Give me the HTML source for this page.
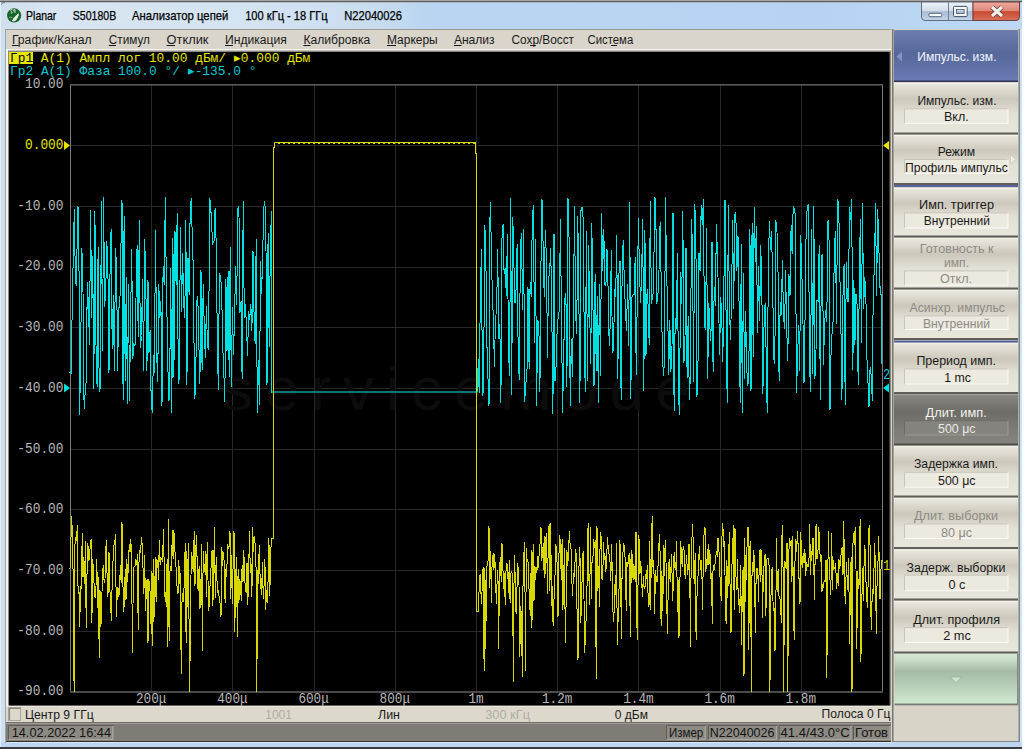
<!DOCTYPE html>
<html><head><meta charset="utf-8"><style>
html,body{margin:0;padding:0}
body{width:1024px;height:749px;overflow:hidden;background:#fff}
svg{display:block}
</style></head><body>
<svg width="1024" height="749" viewBox="0 0 1024 749">
<defs>
<linearGradient id="gglass" x1="0" y1="0" x2="1" y2="0">
 <stop offset="0" stop-color="#d0dfee"/><stop offset="0.05" stop-color="#d8e5f2"/><stop offset="0.25" stop-color="#d4e3f2"/><stop offset="0.37" stop-color="#c8dcf0"/><stop offset="0.42" stop-color="#b9d5f1"/><stop offset="0.8" stop-color="#b6d4f2"/><stop offset="1" stop-color="#bcd8f4"/></linearGradient>
<linearGradient id="gblue" x1="0" y1="0" x2="0" y2="1">
 <stop offset="0" stop-color="#6c7db0"/><stop offset="0.45" stop-color="#56679a"/><stop offset="1" stop-color="#6a7cb4"/></linearGradient>
<linearGradient id="gbtn" x1="0" y1="0" x2="0" y2="1">
 <stop offset="0" stop-color="#ebe8de"/><stop offset="0.32" stop-color="#ccc8bb"/><stop offset="0.6" stop-color="#e2dfd4"/><stop offset="1" stop-color="#e9e6dc"/></linearGradient>
<linearGradient id="gpress" x1="0" y1="0" x2="0" y2="1">
 <stop offset="0" stop-color="#8a8882"/><stop offset="0.35" stop-color="#6e6c66"/><stop offset="0.7" stop-color="#7e7c76"/><stop offset="1" stop-color="#86847e"/></linearGradient>
<linearGradient id="ggreen" x1="0" y1="0" x2="0" y2="1">
 <stop offset="0" stop-color="#d4e8d4"/><stop offset="0.12" stop-color="#c8dcc8"/><stop offset="0.34" stop-color="#a6baa6"/><stop offset="0.62" stop-color="#b8ceb8"/><stop offset="1" stop-color="#d2ead2"/></linearGradient>
<linearGradient id="gcap" x1="0" y1="0" x2="0" y2="1">
 <stop offset="0" stop-color="#eef3f9"/><stop offset="0.48" stop-color="#d2dde9"/><stop offset="0.52" stop-color="#aabcd2"/><stop offset="1" stop-color="#c4d4e6"/></linearGradient>
<linearGradient id="gclose" x1="0" y1="0" x2="0" y2="1">
 <stop offset="0" stop-color="#f2aaa0"/><stop offset="0.48" stop-color="#dc8878"/><stop offset="0.52" stop-color="#cc4a30"/><stop offset="1" stop-color="#d8705a"/></linearGradient>
</defs>
<rect x="0" y="0" width="1024" height="749" fill="#ffffff"/><rect x="0" y="0" width="1022" height="1" fill="#a4a4a4"/><rect x="0" y="1" width="1022" height="1.6" fill="#5e5e5e"/><path d="M0,7Q0,2.5 5,2.5H1022V749H0Z" fill="url(#gglass)"/><rect x="0" y="742" width="1022" height="5" fill="#bcd6f2"/><rect x="6" y="742" width="1014" height="1" fill="#d6e8f8"/><rect x="0" y="747" width="1022" height="2" fill="#3c3c3c"/><path d="M0.5,7Q0.5,2.5 5,2.5" stroke="#6d7e92" stroke-width="1" fill="none"/><rect x="0" y="2" width="1" height="745" fill="#e4eef8"/><rect x="5" y="29" width="1" height="714" fill="#98a6b4"/><rect x="1020" y="29" width="2" height="714" fill="#cfe3f7"/><circle cx="14.1" cy="15.4" r="7.1" fill="#16662a"/><path d="M18.6,13L16,15.6L13.6,18L11.8,21L14,21.4L16.2,20.2L17.8,17.6L18.8,15.2Z" fill="#e6f0e6"/><path d="M12.6,9.4Q10.6,9.2 10.8,10.8Q11.2,11.8 12.2,12.2Q12.8,13.4 10.6,13.2M15,11.2Q13.2,11.6 13.4,10.2Q13.8,9 15,9.4V13" stroke="#cfe0cf" stroke-width="0.9" fill="none"/><path d="M9,17.5Q11,16.5 12.5,18" stroke="#9cc09c" stroke-width="0.8" fill="none"/><text x="26.1" y="20.2" font-family="Liberation Sans" font-size="12.4" fill="#000" textLength="30.2" lengthAdjust="spacingAndGlyphs" stroke="#000" stroke-width="0.25">Planar</text><text x="72.8" y="20.2" font-family="Liberation Sans" font-size="12.4" fill="#000" textLength="43.4" lengthAdjust="spacingAndGlyphs" stroke="#000" stroke-width="0.25">S50180B</text><text x="132.0" y="20.2" font-family="Liberation Sans" font-size="12.4" fill="#000" textLength="96.4" lengthAdjust="spacingAndGlyphs" stroke="#000" stroke-width="0.25">Анализатор цепей</text><text x="245.2" y="20.2" font-family="Liberation Sans" font-size="12.4" fill="#000" textLength="82.5" lengthAdjust="spacingAndGlyphs" stroke="#000" stroke-width="0.25">100 кГц - 18 ГГц</text><text x="344.2" y="20.2" font-family="Liberation Sans" font-size="12.4" fill="#000" textLength="57.8" lengthAdjust="spacingAndGlyphs" stroke="#000" stroke-width="0.25">N22040026</text><path d="M921.5,2V17Q921.5,20.5 925,20.5H973V2Z" fill="url(#gcap)" stroke="#5e6e82" stroke-width="1"/>
<rect x="948" y="2.5" width="1" height="18" fill="#6e7e92"/>
<path d="M973,2V20.5H1016Q1019.5,20.5 1019.5,17V2Z" fill="url(#gclose)" stroke="#6e4040" stroke-width="1"/>
<rect x="929" y="13.3" width="12.7" height="3.4" rx="1" fill="#fff" stroke="#44546a" stroke-width="0.9"/>
<rect x="953.5" y="6.4" width="13.6" height="10.2" rx="1" fill="none" stroke="#44546a" stroke-width="1"/>
<rect x="955.2" y="8.1" width="10.2" height="6.8" fill="none" stroke="#f8f8f8" stroke-width="2"/>
<rect x="956.5" y="9.4" width="7.6" height="4.2" fill="none" stroke="#44546a" stroke-width="0.8"/>
<path d="M992,7L1002,16M1002,7L992,16" stroke="#6a3a30" stroke-width="5"/>
<path d="M992,7L1002,16M1002,7L992,16" stroke="#f0eeee" stroke-width="3.2"/>
<rect x="6" y="29" width="886" height="21" fill="#d9d5ca"/><rect x="6" y="29" width="886" height="1" fill="#9c9a92"/><text x="11.9" y="44.0" font-family="Liberation Sans" font-size="12" fill="#1a1a1a" textLength="79.7" lengthAdjust="spacingAndGlyphs" >График/Канал</text><text x="108.8" y="44.0" font-family="Liberation Sans" font-size="12" fill="#1a1a1a" textLength="41.2" lengthAdjust="spacingAndGlyphs" >Стимул</text><text x="166.6" y="44.0" font-family="Liberation Sans" font-size="12" fill="#1a1a1a" textLength="41.8" lengthAdjust="spacingAndGlyphs" >Отклик</text><text x="225.0" y="44.0" font-family="Liberation Sans" font-size="12" fill="#1a1a1a" textLength="61.9" lengthAdjust="spacingAndGlyphs" >Индикация</text><text x="303.4" y="44.0" font-family="Liberation Sans" font-size="12" fill="#1a1a1a" textLength="66.8" lengthAdjust="spacingAndGlyphs" >Калибровка</text><text x="387.0" y="44.0" font-family="Liberation Sans" font-size="12" fill="#1a1a1a" textLength="50.7" lengthAdjust="spacingAndGlyphs" >Маркеры</text><text x="453.9" y="44.0" font-family="Liberation Sans" font-size="12" fill="#1a1a1a" textLength="40.7" lengthAdjust="spacingAndGlyphs" >Анализ</text><text x="511.5" y="44.0" font-family="Liberation Sans" font-size="12" fill="#1a1a1a" textLength="62.5" lengthAdjust="spacingAndGlyphs" >Сохр/Восст</text><text x="587.5" y="44.0" font-family="Liberation Sans" font-size="12" fill="#1a1a1a" textLength="45.7" lengthAdjust="spacingAndGlyphs" >Система</text><rect x="11.9" y="45" width="6.6" height="1" fill="#1a1a1a"/><rect x="108.8" y="45" width="7.200000000000003" height="1" fill="#1a1a1a"/><rect x="166.6" y="45" width="8.400000000000006" height="1" fill="#1a1a1a"/><rect x="225" y="45" width="8" height="1" fill="#1a1a1a"/><rect x="303.4" y="45" width="7.100000000000023" height="1" fill="#1a1a1a"/><rect x="387" y="45" width="9" height="1" fill="#1a1a1a"/><rect x="453.9" y="45" width="7.600000000000023" height="1" fill="#1a1a1a"/><rect x="530" y="45" width="6" height="1" fill="#1a1a1a"/><rect x="611" y="45" width="6" height="1" fill="#1a1a1a"/>

<rect x="6" y="49" width="886" height="658" fill="#f6f4ee"/>
<rect x="8" y="50.5" width="883" height="655" fill="#8a8880"/>
<rect x="9" y="52" width="881" height="653.5" fill="#000"/>
<path d="M151.5,85V692M70,145.5H882M232.5,85V692M70,206.5H882M314.5,85V692M70,267.5H882M395.5,85V692M70,327.5H882M476.5,85V692M70,388.5H882M557.5,85V692M70,449.5H882M638.5,85V692M70,509.5H882M720.5,85V692M70,570.5H882M801.5,85V692M70,631.5H882" stroke="#282828" stroke-width="1" fill="none"/>
<path d="M70.5,85V693M882.5,85V693" stroke="#7c7c7c" stroke-width="1"/><rect x="70" y="84" width="813" height="1.6" fill="#5a5a5a"/><rect x="70" y="691" width="813" height="2" fill="#4a4a4a"/><rect x="889" y="52" width="1" height="653" fill="#383838"/>
<text x="222" y="410" font-family="Liberation Sans" font-size="62" fill="#0c0c0c" textLength="468" lengthAdjust="spacing">servicemode</text>
<text x="25.0" y="88.3" font-family="Liberation Mono" font-size="14" fill="#b8b8b8" textLength="38.5" lengthAdjust="spacingAndGlyphs" >10.00</text><text x="25.0" y="149.0" font-family="Liberation Mono" font-size="14" fill="#e6e600" textLength="38.5" lengthAdjust="spacingAndGlyphs" >0.000</text><text x="17.3" y="209.7" font-family="Liberation Mono" font-size="14" fill="#b8b8b8" textLength="46.2" lengthAdjust="spacingAndGlyphs" >-10.00</text><text x="17.3" y="270.4" font-family="Liberation Mono" font-size="14" fill="#b8b8b8" textLength="46.2" lengthAdjust="spacingAndGlyphs" >-20.00</text><text x="17.3" y="331.1" font-family="Liberation Mono" font-size="14" fill="#b8b8b8" textLength="46.2" lengthAdjust="spacingAndGlyphs" >-30.00</text><text x="17.3" y="391.8" font-family="Liberation Mono" font-size="14" fill="#b8b8b8" textLength="46.2" lengthAdjust="spacingAndGlyphs" >-40.00</text><text x="17.3" y="452.5" font-family="Liberation Mono" font-size="14" fill="#b8b8b8" textLength="46.2" lengthAdjust="spacingAndGlyphs" >-50.00</text><text x="17.3" y="513.2" font-family="Liberation Mono" font-size="14" fill="#b8b8b8" textLength="46.2" lengthAdjust="spacingAndGlyphs" >-60.00</text><text x="17.3" y="573.9" font-family="Liberation Mono" font-size="14" fill="#b8b8b8" textLength="46.2" lengthAdjust="spacingAndGlyphs" >-70.00</text><text x="17.3" y="634.6" font-family="Liberation Mono" font-size="14" fill="#b8b8b8" textLength="46.2" lengthAdjust="spacingAndGlyphs" >-80.00</text><text x="17.3" y="695.3" font-family="Liberation Mono" font-size="14" fill="#b8b8b8" textLength="46.2" lengthAdjust="spacingAndGlyphs" >-90.00</text><text x="136.0" y="702.6" font-family="Liberation Mono" font-size="14" fill="#b8b8b8" textLength="30.4" lengthAdjust="spacingAndGlyphs" >200μ</text><text x="217.2" y="702.6" font-family="Liberation Mono" font-size="14" fill="#b8b8b8" textLength="30.4" lengthAdjust="spacingAndGlyphs" >400μ</text><text x="298.4" y="702.6" font-family="Liberation Mono" font-size="14" fill="#b8b8b8" textLength="30.4" lengthAdjust="spacingAndGlyphs" >600μ</text><text x="379.6" y="702.6" font-family="Liberation Mono" font-size="14" fill="#b8b8b8" textLength="30.4" lengthAdjust="spacingAndGlyphs" >800μ</text><text x="468.4" y="702.6" font-family="Liberation Mono" font-size="14" fill="#b8b8b8" textLength="15.2" lengthAdjust="spacingAndGlyphs" >1m</text><text x="542.0" y="702.6" font-family="Liberation Mono" font-size="14" fill="#b8b8b8" textLength="30.4" lengthAdjust="spacingAndGlyphs" >1.2m</text><text x="623.2" y="702.6" font-family="Liberation Mono" font-size="14" fill="#b8b8b8" textLength="30.4" lengthAdjust="spacingAndGlyphs" >1.4m</text><text x="704.4" y="702.6" font-family="Liberation Mono" font-size="14" fill="#b8b8b8" textLength="30.4" lengthAdjust="spacingAndGlyphs" >1.6m</text><text x="785.6" y="702.6" font-family="Liberation Mono" font-size="14" fill="#b8b8b8" textLength="30.4" lengthAdjust="spacingAndGlyphs" >1.8m</text>
<rect x="9" y="52" width="24" height="12" fill="#e6e600"/><text x="10.0" y="62.0" font-family="Liberation Mono" font-size="12.8" fill="#000" textLength="23.1" lengthAdjust="spacingAndGlyphs" >Гр1</text><text x="40.8" y="62.0" font-family="Liberation Mono" font-size="12.8" fill="#e6e600" textLength="269.5" lengthAdjust="spacingAndGlyphs" >A(1) Ампл лог 10.00 дБм/ ▸0.000 дБм</text><text x="10.0" y="74.5" font-family="Liberation Mono" font-size="12.8" fill="#10c8d0" textLength="246.4" lengthAdjust="spacingAndGlyphs" >Гр2 A(1) Фаза 100.0 °/ ▸-135.0 °</text>
<path shape-rendering="crispEdges" d="M70.0,372.5 L71.1,373.1 L72.2,309.3 L73.2,259.3 L74.3,208.8 L75.4,280.6 L76.5,286.0 L77.6,206.9 L78.7,207.6 L79.7,414.8 L80.8,339.2 L81.9,248.1 L83.0,291.8 L84.1,409.4 L85.2,392.7 L86.2,381.0 L87.3,282.5 L88.4,304.5 L89.5,344.5 L90.6,210.3 L91.7,318.1 L92.7,256.2 L93.8,388.8 L94.9,211.0 L96.0,345.1 L97.1,386.7 L98.1,246.6 L99.2,392.2 L100.3,387.1 L101.4,201.0 L102.5,351.2 L103.6,197.3 L104.6,306.7 L105.7,292.2 L106.8,241.3 L107.9,267.8 L109.0,372.8 L110.1,266.0 L111.1,229.5 L112.2,349.3 L113.3,294.8 L114.4,371.2 L115.5,248.3 L116.6,266.7 L117.6,371.4 L118.7,307.5 L119.8,307.4 L120.9,248.5 L122.0,200.2 L123.1,400.4 L124.1,215.7 L125.2,381.2 L126.3,277.2 L127.4,404.3 L128.5,284.1 L129.5,401.1 L130.6,318.2 L131.7,249.3 L132.8,358.6 L133.9,344.0 L135.0,346.2 L136.0,298.1 L137.1,245.4 L138.2,336.7 L139.3,220.3 L140.4,347.9 L141.5,335.5 L142.5,279.1 L143.6,371.1 L144.7,239.3 L145.8,282.1 L146.9,370.9 L148.0,279.9 L149.0,352.5 L150.1,330.5 L151.2,402.1 L152.3,413.2 L153.4,354.8 L154.4,373.3 L155.5,230.3 L156.6,352.4 L157.7,381.8 L158.8,284.5 L159.9,317.6 L160.9,301.5 L162.0,406.0 L163.1,266.2 L164.2,284.7 L165.3,197.2 L166.4,288.6 L167.4,334.7 L168.5,400.8 L169.6,398.4 L170.7,268.4 L171.8,412.6 L172.9,237.9 L173.9,376.5 L175.0,231.3 L176.1,285.3 L177.2,213.0 L178.3,384.1 L179.3,377.7 L180.4,227.5 L181.5,311.9 L182.6,253.3 L183.7,304.2 L184.8,317.6 L185.8,220.2 L186.9,385.4 L188.0,257.8 L189.1,294.5 L190.2,209.5 L191.3,197.6 L192.3,239.5 L193.4,271.5 L194.5,399.3 L195.6,391.0 L196.7,301.7 L197.8,296.1 L198.8,342.4 L199.9,384.2 L201.0,270.5 L202.1,370.0 L203.2,284.0 L204.3,326.5 L205.3,357.8 L206.4,306.3 L207.5,347.6 L208.6,349.0 L209.7,198.2 L210.7,205.5 L211.8,229.5 L212.9,243.6 L214.0,241.3 L215.1,207.7 L216.2,244.4 L217.2,328.0 L218.3,390.2 L219.4,273.2 L220.5,276.9 L221.6,287.8 L222.7,345.3 L223.7,368.2 L224.8,402.1 L225.9,278.9 L227.0,351.1 L228.1,271.5 L229.2,376.6 L230.2,247.3 L231.3,386.9 L232.4,307.1 L233.5,355.1 L234.6,313.6 L235.6,265.9 L236.7,304.8 L237.8,208.0 L238.9,206.4 L240.0,312.5 L241.1,301.0 L242.1,378.6 L243.2,201.4 L244.3,318.4 L245.4,304.0 L246.5,327.4 L247.6,356.0 L248.6,311.4 L249.7,319.7 L250.8,304.2 L251.9,331.1 L253.0,251.1 L254.1,317.5 L255.1,343.6 L256.2,238.7 L257.3,412.9 L258.4,359.7 L259.5,405.3 L260.5,261.1 L261.6,293.7 L262.7,254.0 L263.8,207.2 L264.9,200.6 L266.0,250.8 L267.0,384.8 L268.1,232.7 L269.2,347.3 L270.3,251.4 L271.4,211.3 L272.0,392.0" fill="none" stroke="#00e0e0" stroke-width="1.0" stroke-linecap="square"/>
<path shape-rendering="crispEdges" d="M477.5,392.0 L478.2,359.0 L479.2,392.5 L480.3,299.3 L481.4,249.0 L482.5,395.6 L483.6,389.8 L484.7,224.6 L485.7,243.1 L486.8,340.9 L487.9,375.9 L489.0,406.3 L490.1,201.6 L491.2,238.2 L492.2,289.2 L493.3,317.1 L494.4,366.7 L495.5,318.4 L496.6,310.1 L497.7,249.2 L498.7,338.7 L499.8,324.0 L500.9,403.2 L502.0,238.4 L503.1,224.2 L504.1,274.1 L505.2,268.0 L506.3,295.8 L507.4,234.4 L508.5,351.1 L509.6,376.3 L510.6,198.4 L511.7,395.4 L512.8,216.7 L513.9,263.8 L515.0,303.0 L516.1,289.4 L517.1,243.9 L518.2,356.0 L519.3,379.9 L520.4,246.6 L521.5,232.9 L522.6,310.1 L523.6,229.4 L524.7,401.8 L525.8,382.6 L526.9,379.0 L528.0,286.7 L529.1,368.5 L530.1,282.4 L531.2,296.8 L532.3,220.1 L533.4,205.2 L534.5,343.1 L535.5,239.1 L536.6,405.5 L537.7,320.2 L538.8,322.7 L539.9,392.0 L541.0,261.9 L542.0,199.3 L543.1,244.9 L544.2,296.8 L545.3,230.1 L546.4,258.2 L547.5,357.8 L548.5,279.2 L549.6,271.5 L550.7,247.9 L551.8,312.9 L552.9,414.0 L554.0,233.9 L555.0,380.9 L556.1,365.9 L557.2,328.0 L558.3,315.4 L559.4,310.4 L560.4,219.4 L561.5,321.0 L562.6,412.6 L563.7,356.0 L564.8,298.7 L565.9,293.5 L566.9,386.6 L568.0,198.4 L569.1,240.6 L570.2,405.7 L571.3,339.5 L572.4,377.4 L573.4,313.4 L574.5,206.0 L575.6,313.9 L576.7,334.3 L577.8,216.3 L578.9,301.8 L579.9,402.5 L581.0,210.6 L582.1,207.1 L583.2,219.5 L584.3,345.7 L585.3,391.7 L586.4,231.1 L587.5,381.1 L588.6,245.4 L589.7,314.3 L590.8,363.5 L591.8,222.7 L592.9,301.1 L594.0,385.9 L595.1,274.4 L596.2,370.8 L597.3,296.1 L598.3,402.6 L599.4,284.3 L600.5,376.3 L601.6,213.5 L602.7,270.9 L603.8,228.8 L604.8,285.0 L605.9,285.4 L607.0,249.4 L608.1,288.4 L609.2,345.6 L610.3,322.9 L611.3,250.1 L612.4,352.1 L613.5,351.5 L614.6,289.0 L615.7,297.2 L616.7,234.8 L617.8,379.0 L618.9,274.7 L620.0,260.9 L621.1,399.5 L622.2,263.6 L623.2,240.2 L624.3,280.4 L625.4,309.4 L626.5,330.9 L627.6,283.9 L628.7,346.2 L629.7,202.0 L630.8,399.0 L631.9,297.5 L633.0,294.8 L634.1,294.4 L635.2,257.1 L636.2,374.6 L637.3,295.7 L638.4,217.8 L639.5,273.3 L640.6,302.7 L641.6,275.4 L642.7,219.3 L643.8,390.8 L644.9,229.9 L646.0,355.9 L647.1,289.5 L648.1,305.0 L649.2,344.6 L650.3,200.7 L651.4,303.7 L652.5,297.1 L653.6,290.5 L654.6,197.3 L655.7,199.5 L656.8,303.8 L657.9,296.3 L659.0,270.0 L660.1,222.4 L661.1,276.3 L662.2,343.7 L663.3,375.7 L664.4,363.6 L665.5,197.4 L666.5,270.8 L667.6,303.6 L668.7,374.5 L669.8,320.1 L670.9,371.8 L672.0,347.2 L673.0,212.8 L674.1,410.9 L675.2,318.5 L676.3,328.6 L677.4,253.5 L678.5,393.9 L679.5,414.6 L680.6,271.8 L681.7,303.6 L682.8,210.8 L683.9,363.4 L685.0,337.3 L686.0,247.9 L687.1,377.9 L688.2,316.3 L689.3,399.5 L690.4,375.8 L691.5,218.9 L692.5,248.7 L693.6,382.0 L694.7,203.9 L695.8,225.4 L696.9,397.4 L697.9,373.7 L699.0,252.6 L700.1,270.8 L701.2,205.3 L702.3,224.6 L703.4,199.4 L704.4,325.0 L705.5,330.1 L706.6,228.4 L707.7,378.7 L708.8,303.3 L709.9,327.7 L710.9,341.4 L712.0,241.8 L713.1,372.2 L714.2,286.6 L715.3,305.6 L716.4,224.5 L717.4,252.6 L718.5,296.3 L719.6,354.9 L720.7,296.8 L721.8,319.2 L722.8,362.0 L723.9,284.8 L725.0,200.5 L726.1,319.4 L727.2,402.8 L728.3,205.3 L729.3,297.9 L730.4,339.7 L731.5,303.6 L732.6,219.6 L733.7,309.0 L734.8,214.4 L735.8,212.3 L736.9,270.7 L738.0,235.7 L739.1,307.0 L740.2,402.9 L741.3,243.9 L742.3,412.5 L743.4,273.2 L744.5,379.2 L745.6,311.0 L746.7,367.2 L747.7,385.6 L748.8,380.5 L749.9,229.2 L751.0,391.3 L752.1,223.1 L753.2,357.1 L754.2,207.0 L755.3,262.4 L756.4,225.8 L757.5,332.5 L758.6,265.6 L759.7,320.5 L760.7,244.6 L761.8,284.0 L762.9,393.5 L764.0,327.2 L765.1,303.1 L766.2,355.2 L767.2,413.4 L768.3,269.8 L769.4,220.9 L770.5,249.5 L771.6,231.1 L772.7,285.4 L773.7,358.8 L774.8,364.1 L775.9,220.5 L777.0,232.3 L778.1,275.5 L779.1,381.1 L780.2,302.5 L781.3,314.5 L782.4,260.5 L783.5,316.9 L784.6,328.9 L785.6,270.3 L786.7,328.1 L787.8,361.4 L788.9,274.2 L790.0,296.4 L791.1,225.4 L792.1,253.5 L793.2,205.9 L794.3,209.3 L795.4,215.4 L796.5,392.7 L797.6,356.6 L798.6,324.6 L799.7,371.0 L800.8,235.4 L801.9,273.7 L803.0,323.9 L804.0,383.4 L805.1,314.8 L806.2,224.4 L807.3,206.7 L808.4,204.6 L809.5,361.8 L810.5,392.0 L811.6,228.7 L812.7,373.6 L813.8,206.1 L814.9,379.1 L816.0,350.1 L817.0,300.2 L818.1,301.0 L819.2,244.8 L820.3,399.9 L821.4,256.3 L822.5,254.7 L823.5,365.1 L824.6,322.8 L825.7,309.6 L826.8,321.5 L827.9,221.1 L828.9,220.8 L830.0,410.4 L831.1,350.2 L832.2,331.0 L833.3,319.2 L834.4,248.2 L835.4,231.2 L836.5,324.3 L837.6,199.2 L838.7,203.0 L839.8,271.8 L840.9,324.7 L841.9,399.7 L843.0,295.7 L844.1,263.6 L845.2,405.1 L846.3,261.8 L847.4,301.9 L848.4,301.1 L849.5,206.6 L850.6,220.1 L851.7,198.8 L852.8,370.1 L853.9,279.8 L854.9,345.4 L856.0,294.3 L857.1,305.0 L858.2,385.3 L859.3,283.0 L860.3,219.2 L861.4,342.8 L862.5,203.4 L863.6,309.4 L864.7,277.4 L865.8,290.0 L866.8,355.7 L867.9,379.9 L869.0,406.8 L870.1,367.0 L871.2,375.7 L872.3,401.2 L873.3,280.9 L874.4,271.8 L875.5,203.0 L876.6,295.9 L877.7,209.3 L878.8,243.7 L879.8,287.0 L880.9,286.7 L882.0,363.8" fill="none" stroke="#00e0e0" stroke-width="1.0" stroke-linecap="square"/>
<polyline points="272.0,392.0 477.5,392.0" fill="none" stroke="#0e9c9c" stroke-width="1.3"/>
<path shape-rendering="crispEdges" d="M70.0,568.5 L70.8,544.1 L71.6,516.5 L72.4,533.8 L73.2,578.9 L74.1,691.5 L74.9,545.7 L75.7,536.6 L76.5,540.9 L77.3,525.2 L78.1,594.2 L78.9,586.1 L79.7,626.9 L80.6,585.7 L81.4,588.8 L82.2,533.1 L83.0,577.2 L83.8,557.0 L84.6,584.1 L85.4,540.6 L86.2,627.7 L87.1,567.7 L87.9,542.9 L88.7,560.1 L89.5,558.7 L90.3,543.5 L91.1,539.2 L91.9,622.6 L92.7,559.2 L93.5,570.0 L94.4,592.6 L95.2,598.2 L96.0,586.0 L96.8,559.1 L97.6,608.1 L98.4,577.1 L99.2,657.7 L100.0,590.1 L100.9,627.3 L101.7,602.6 L102.5,574.0 L103.3,565.3 L104.1,581.6 L104.9,583.3 L105.7,550.1 L106.5,539.7 L107.4,596.9 L108.2,592.1 L109.0,552.3 L109.8,588.6 L110.6,603.2 L111.4,620.9 L112.2,581.7 L113.0,561.3 L113.8,545.6 L114.7,544.4 L115.5,533.8 L116.3,617.2 L117.1,598.1 L117.9,586.7 L118.7,596.8 L119.5,593.1 L120.3,565.1 L121.2,583.4 L122.0,521.9 L122.8,578.3 L123.6,611.5 L124.4,603.3 L125.2,569.0 L126.0,600.4 L126.8,559.0 L127.7,581.9 L128.5,559.8 L129.3,544.5 L130.1,552.4 L130.9,539.0 L131.7,572.9 L132.5,652.8 L133.3,576.2 L134.1,566.4 L135.0,566.5 L135.8,558.7 L136.6,565.4 L137.4,554.2 L138.2,630.1 L139.0,562.4 L139.8,551.1 L140.6,552.3 L141.5,537.0 L142.3,546.0 L143.1,570.9 L143.9,593.9 L144.7,554.6 L145.5,611.3 L146.3,593.1 L147.1,578.9 L148.0,642.8 L148.8,579.0 L149.6,587.8 L150.4,593.5 L151.2,633.6 L152.0,571.0 L152.8,645.5 L153.6,559.3 L154.4,617.2 L155.3,557.4 L156.1,602.4 L156.9,559.9 L157.7,560.8 L158.5,579.8 L159.3,539.8 L160.1,564.7 L160.9,558.0 L161.8,558.7 L162.6,562.1 L163.4,529.1 L164.2,564.5 L165.0,596.5 L165.8,602.0 L166.6,564.4 L167.4,646.9 L168.3,519.0 L169.1,641.3 L169.9,571.9 L170.7,565.7 L171.5,571.4 L172.3,530.4 L173.1,559.3 L173.9,530.4 L174.7,550.4 L175.6,554.7 L176.4,577.6 L177.2,588.8 L178.0,594.1 L178.8,559.8 L179.6,584.1 L180.4,573.4 L181.2,673.8 L182.1,594.7 L182.9,593.3 L183.7,602.2 L184.5,567.3 L185.3,542.9 L186.1,643.3 L186.9,551.2 L187.7,607.1 L188.6,542.9 L189.4,691.5 L190.2,652.1 L191.0,574.9 L191.8,552.2 L192.6,566.3 L193.4,572.1 L194.2,530.6 L195.0,585.5 L195.9,547.2 L196.7,535.5 L197.5,588.3 L198.3,589.5 L199.1,566.3 L199.9,609.4 L200.7,601.2 L201.5,544.0 L202.4,651.2 L203.2,551.3 L204.0,563.5 L204.8,571.8 L205.6,551.2 L206.4,597.4 L207.2,541.8 L208.0,580.3 L208.9,610.9 L209.7,586.9 L210.5,584.4 L211.3,558.9 L212.1,550.1 L212.9,605.8 L213.7,565.1 L214.5,527.5 L215.3,598.2 L216.2,556.8 L217.0,581.1 L217.8,593.0 L218.6,590.2 L219.4,600.4 L220.2,603.6 L221.0,617.3 L221.8,546.7 L222.7,565.7 L223.5,551.7 L224.3,564.6 L225.1,603.1 L225.9,568.6 L226.7,576.8 L227.5,544.4 L228.3,548.1 L229.2,546.2 L230.0,530.9 L230.8,599.0 L231.6,554.7 L232.4,603.5 L233.2,559.0 L234.0,530.8 L234.8,631.7 L235.6,579.5 L236.5,557.2 L237.3,636.7 L238.1,568.6 L238.9,603.4 L239.7,579.0 L240.5,583.4 L241.3,601.0 L242.1,565.3 L243.0,582.2 L243.8,549.7 L244.6,578.2 L245.4,586.8 L246.2,593.4 L247.0,562.7 L247.8,604.7 L248.6,572.9 L249.5,531.3 L250.3,572.9 L251.1,564.4 L251.9,596.7 L252.7,527.0 L253.5,551.9 L254.3,536.1 L255.1,543.5 L255.9,549.4 L256.8,691.5 L257.6,569.6 L258.4,583.5 L259.2,545.1 L260.0,573.6 L260.8,586.7 L261.6,595.0 L262.4,562.5 L263.3,599.2 L264.1,584.8 L264.9,558.7 L265.7,609.9 L266.5,590.2 L267.3,603.0 L268.1,579.5 L268.9,537.8 L269.8,595.6 L270.6,556.0 L271.4,538.2 L273.5,538.2 L273.5,148.0 L274.5,147.0 L274.5,142.5 L275.5,142.5 L278.5,142.5 L279.0,143.5 L280.0,142.5 L280.5,142.5 L283.5,142.5 L284.0,143.5 L285.0,142.5 L285.5,142.5 L288.5,142.5 L289.0,143.5 L290.0,142.5 L290.5,142.5 L293.5,142.5 L294.0,143.5 L295.0,142.5 L295.5,142.5 L298.5,142.5 L299.0,143.5 L300.0,142.5 L300.5,142.5 L303.5,142.5 L304.0,143.5 L305.0,142.5 L305.5,142.5 L308.5,142.5 L309.0,143.5 L310.0,142.5 L310.5,142.5 L313.5,142.5 L314.0,143.5 L315.0,142.5 L315.5,142.5 L318.5,142.5 L319.0,143.5 L320.0,142.5 L320.5,142.5 L323.5,142.5 L324.0,143.5 L325.0,142.5 L325.5,142.5 L328.5,142.5 L329.0,143.5 L330.0,142.5 L330.5,142.5 L333.5,142.5 L334.0,143.5 L335.0,142.5 L335.5,142.5 L338.5,142.5 L339.0,143.5 L340.0,142.5 L340.5,142.5 L343.5,142.5 L344.0,143.5 L345.0,142.5 L345.5,142.5 L348.5,142.5 L349.0,143.5 L350.0,142.5 L350.5,142.5 L353.5,142.5 L354.0,143.5 L355.0,142.5 L355.5,142.5 L358.5,142.5 L359.0,143.5 L360.0,142.5 L360.5,142.5 L363.5,142.5 L364.0,143.5 L365.0,142.5 L365.5,142.5 L368.5,142.5 L369.0,143.5 L370.0,142.5 L370.5,142.5 L373.5,142.5 L374.0,143.5 L375.0,142.5 L375.5,142.5 L378.5,142.5 L379.0,143.5 L380.0,142.5 L380.5,142.5 L383.5,142.5 L384.0,143.5 L385.0,142.5 L385.5,142.5 L388.5,142.5 L389.0,143.5 L390.0,142.5 L390.5,142.5 L393.5,142.5 L394.0,143.5 L395.0,142.5 L395.5,142.5 L398.5,142.5 L399.0,143.5 L400.0,142.5 L400.5,142.5 L403.5,142.5 L404.0,143.5 L405.0,142.5 L405.5,142.5 L408.5,142.5 L409.0,143.5 L410.0,142.5 L410.5,142.5 L413.5,142.5 L414.0,143.5 L415.0,142.5 L415.5,142.5 L418.5,142.5 L419.0,143.5 L420.0,142.5 L420.5,142.5 L423.5,142.5 L424.0,143.5 L425.0,142.5 L425.5,142.5 L428.5,142.5 L429.0,143.5 L430.0,142.5 L430.5,142.5 L433.5,142.5 L434.0,143.5 L435.0,142.5 L435.5,142.5 L438.5,142.5 L439.0,143.5 L440.0,142.5 L440.5,142.5 L443.5,142.5 L444.0,143.5 L445.0,142.5 L445.5,142.5 L448.5,142.5 L449.0,143.5 L450.0,142.5 L450.5,142.5 L453.5,142.5 L454.0,143.5 L455.0,142.5 L455.5,142.5 L458.5,142.5 L459.0,143.5 L460.0,142.5 L460.5,142.5 L463.5,142.5 L464.0,143.5 L465.0,142.5 L465.5,142.5 L468.5,142.5 L469.0,143.5 L470.0,142.5 L470.5,142.5 L473.5,142.5 L474.0,143.5 L475.0,142.5 L475.5,142.5 L475.5,153.0 L476.5,154.0 L476.5,611.3 L478.4,611.3 L479.2,586.4 L480.1,574.1 L480.9,592.1 L481.7,603.7 L482.5,573.2 L483.3,567.4 L484.1,670.9 L484.9,568.2 L485.7,649.0 L486.6,571.0 L487.4,561.7 L488.2,560.3 L489.0,526.0 L489.8,588.4 L490.6,551.2 L491.4,602.6 L492.2,556.7 L493.1,555.0 L493.9,569.9 L494.7,554.0 L495.5,572.9 L496.3,604.3 L497.1,581.7 L497.9,570.5 L498.7,648.6 L499.5,569.3 L500.4,557.1 L501.2,581.6 L502.0,543.5 L502.8,564.4 L503.6,588.7 L504.4,573.4 L505.2,604.5 L506.0,570.9 L506.9,563.0 L507.7,571.0 L508.5,592.7 L509.3,560.2 L510.1,603.4 L510.9,573.1 L511.7,571.7 L512.5,574.8 L513.4,682.3 L514.2,555.0 L515.0,571.4 L515.8,611.7 L516.6,613.9 L517.4,563.4 L518.2,567.5 L519.0,584.9 L519.8,656.6 L520.7,606.3 L521.5,617.7 L522.3,677.1 L523.1,575.1 L523.9,553.8 L524.7,541.9 L525.5,670.9 L526.3,548.4 L527.2,561.6 L528.0,562.2 L528.8,581.0 L529.6,610.3 L530.4,573.1 L531.2,628.3 L532.0,549.6 L532.8,619.5 L533.7,544.4 L534.5,599.8 L535.3,569.7 L536.1,566.7 L536.9,572.7 L537.7,556.1 L538.5,568.4 L539.3,549.3 L540.1,543.2 L541.0,527.5 L541.8,561.4 L542.6,550.6 L543.4,542.8 L544.2,577.7 L545.0,536.1 L545.8,574.0 L546.6,533.3 L547.5,594.1 L548.3,538.4 L549.1,524.1 L549.9,590.5 L550.7,523.2 L551.5,606.2 L552.3,586.1 L553.1,625.9 L554.0,599.3 L554.8,586.1 L555.6,545.0 L556.4,546.3 L557.2,566.3 L558.0,617.4 L558.8,558.8 L559.6,535.2 L560.4,542.9 L561.3,580.4 L562.1,539.3 L562.9,609.7 L563.7,575.5 L564.5,548.5 L565.3,642.8 L566.1,601.9 L566.9,550.1 L567.8,565.8 L568.6,549.0 L569.4,531.3 L570.2,546.7 L571.0,548.9 L571.8,579.5 L572.6,596.3 L573.4,573.4 L574.3,577.3 L575.1,560.7 L575.9,549.0 L576.7,577.4 L577.5,660.2 L578.3,656.6 L579.1,554.6 L579.9,546.9 L580.7,623.4 L581.6,603.3 L582.4,562.0 L583.2,551.0 L584.0,599.2 L584.8,652.9 L585.6,623.8 L586.4,618.6 L587.2,577.2 L588.1,522.7 L588.9,576.8 L589.7,604.7 L590.5,526.7 L591.3,599.1 L592.1,558.1 L592.9,559.2 L593.7,539.0 L594.6,547.5 L595.4,539.8 L596.2,678.5 L597.0,525.6 L597.8,590.5 L598.6,566.1 L599.4,607.3 L600.2,531.7 L601.0,534.9 L601.9,578.2 L602.7,580.0 L603.5,541.8 L604.3,560.0 L605.1,556.1 L605.9,571.6 L606.7,556.4 L607.5,537.2 L608.4,550.1 L609.2,555.3 L610.0,562.1 L610.8,580.8 L611.6,544.3 L612.4,579.2 L613.2,621.7 L614.0,613.8 L614.9,584.5 L615.7,595.4 L616.5,542.8 L617.3,645.0 L618.1,618.9 L618.9,597.3 L619.7,540.3 L620.5,550.7 L621.3,638.5 L622.2,563.5 L623.0,551.7 L623.8,543.0 L624.6,551.4 L625.4,562.6 L626.2,610.8 L627.0,561.7 L627.8,567.0 L628.7,555.8 L629.5,553.4 L630.3,637.3 L631.1,549.8 L631.9,583.0 L632.7,553.9 L633.5,580.1 L634.3,565.9 L635.2,581.9 L636.0,532.1 L636.8,622.9 L637.6,640.3 L638.4,534.7 L639.2,540.7 L640.0,573.7 L640.8,561.5 L641.6,579.7 L642.5,596.8 L643.3,576.4 L644.1,588.1 L644.9,588.6 L645.7,573.6 L646.5,578.8 L647.3,564.6 L648.1,596.5 L649.0,606.8 L649.8,540.7 L650.6,610.1 L651.4,548.3 L652.2,516.2 L653.0,566.8 L653.8,560.1 L654.6,614.2 L655.5,570.0 L656.3,579.7 L657.1,581.8 L657.9,569.1 L658.7,547.8 L659.5,534.4 L660.3,560.0 L661.1,625.8 L661.9,570.8 L662.8,610.5 L663.6,545.5 L664.4,575.7 L665.2,539.6 L666.0,562.2 L666.8,607.2 L667.6,634.3 L668.4,568.0 L669.3,558.7 L670.1,581.5 L670.9,569.6 L671.7,554.2 L672.5,601.3 L673.3,584.9 L674.1,552.1 L674.9,567.5 L675.8,569.9 L676.6,541.2 L677.4,611.6 L678.2,579.8 L679.0,638.0 L679.8,590.2 L680.6,541.3 L681.4,553.1 L682.2,567.4 L683.1,546.9 L683.9,546.3 L684.7,572.5 L685.5,579.1 L686.3,555.5 L687.1,564.8 L687.9,574.5 L688.7,543.6 L689.6,546.0 L690.4,647.4 L691.2,558.2 L692.0,537.3 L692.8,524.3 L693.6,572.9 L694.4,583.6 L695.2,552.9 L696.1,639.9 L696.9,598.2 L697.7,580.7 L698.5,568.2 L699.3,545.6 L700.1,561.8 L700.9,570.0 L701.7,560.5 L702.5,609.5 L703.4,552.9 L704.2,530.5 L705.0,527.2 L705.8,572.1 L706.6,559.1 L707.4,564.7 L708.2,543.8 L709.0,564.6 L709.9,549.7 L710.7,579.2 L711.5,572.8 L712.3,624.0 L713.1,564.8 L713.9,571.3 L714.7,565.3 L715.5,560.8 L716.4,551.1 L717.2,556.5 L718.0,538.3 L718.8,543.3 L719.6,576.4 L720.4,577.7 L721.2,601.1 L722.0,536.3 L722.8,523.3 L723.7,547.3 L724.5,541.3 L725.3,595.0 L726.1,623.6 L726.9,560.4 L727.7,597.6 L728.5,566.9 L729.3,531.7 L730.2,596.9 L731.0,633.0 L731.8,568.5 L732.6,551.4 L733.4,524.6 L734.2,609.5 L735.0,528.3 L735.8,572.7 L736.7,589.7 L737.5,558.6 L738.3,604.9 L739.1,598.9 L739.9,613.1 L740.7,564.8 L741.5,644.5 L742.3,594.2 L743.1,566.6 L744.0,676.2 L744.8,537.8 L745.6,602.1 L746.4,559.9 L747.2,543.8 L748.0,526.7 L748.8,649.7 L749.6,550.3 L750.5,541.5 L751.3,691.5 L752.1,561.6 L752.9,575.6 L753.7,550.5 L754.5,563.2 L755.3,632.6 L756.1,577.5 L757.0,568.5 L757.8,570.4 L758.6,602.2 L759.4,550.0 L760.2,582.1 L761.0,549.5 L761.8,560.0 L762.6,617.9 L763.4,568.2 L764.3,564.7 L765.1,554.0 L765.9,615.8 L766.7,559.7 L767.5,558.6 L768.3,558.6 L769.1,565.9 L769.9,691.5 L770.8,603.6 L771.6,570.0 L772.4,568.6 L773.2,611.4 L774.0,607.6 L774.8,651.1 L775.6,648.1 L776.4,538.3 L777.3,592.2 L778.1,568.8 L778.9,595.6 L779.7,597.7 L780.5,602.0 L781.3,622.5 L782.1,525.1 L782.9,546.7 L783.7,691.5 L784.6,561.0 L785.4,563.6 L786.2,568.7 L787.0,542.8 L787.8,691.5 L788.6,561.2 L789.4,537.6 L790.2,546.3 L791.1,540.3 L791.9,582.2 L792.7,535.9 L793.5,615.3 L794.3,639.7 L795.1,551.7 L795.9,538.8 L796.7,551.6 L797.6,531.1 L798.4,553.5 L799.2,586.1 L800.0,604.0 L800.8,532.2 L801.6,562.5 L802.4,567.6 L803.2,552.6 L804.0,563.2 L804.9,549.3 L805.7,576.0 L806.5,562.3 L807.3,564.7 L808.1,566.9 L808.9,564.0 L809.7,524.5 L810.5,575.3 L811.4,551.3 L812.2,555.0 L813.0,537.8 L813.8,566.3 L814.6,599.5 L815.4,531.5 L816.2,524.3 L817.0,559.3 L817.9,553.9 L818.7,526.7 L819.5,539.7 L820.3,561.9 L821.1,554.7 L821.9,592.0 L822.7,585.2 L823.5,586.7 L824.3,579.8 L825.2,582.3 L826.0,560.0 L826.8,678.1 L827.6,589.5 L828.4,531.2 L829.2,564.7 L830.0,579.6 L830.8,595.3 L831.7,533.3 L832.5,590.2 L833.3,559.7 L834.1,568.0 L834.9,568.5 L835.7,562.7 L836.5,588.8 L837.3,573.2 L838.2,585.5 L839.0,559.5 L839.8,568.8 L840.6,556.3 L841.4,553.4 L842.2,546.8 L843.0,574.6 L843.8,521.5 L844.6,589.3 L845.5,604.3 L846.3,562.3 L847.1,576.0 L847.9,589.8 L848.7,558.0 L849.5,644.3 L850.3,599.5 L851.1,556.8 L852.0,691.5 L852.8,546.3 L853.6,533.2 L854.4,545.0 L855.2,527.5 L856.0,569.3 L856.8,649.0 L857.6,571.2 L858.5,588.5 L859.3,583.0 L860.1,519.2 L860.9,662.1 L861.7,611.2 L862.5,568.0 L863.3,601.2 L864.1,562.1 L864.9,545.0 L865.8,578.0 L866.6,594.0 L867.4,608.3 L868.2,581.3 L869.0,528.1 L869.8,525.0 L870.6,603.1 L871.4,629.6 L872.3,588.8 L873.1,594.3 L873.9,572.1 L874.7,543.5 L875.5,573.1 L876.3,633.5 L877.1,579.9 L877.9,564.5 L878.8,535.9 L879.6,598.6 L880.4,598.5 L881.2,560.3 L882.0,560.6" fill="none" stroke="#d8d800" stroke-width="1.0" stroke-linecap="square"/>
<polygon points="64,141 70,145.5 64,150" fill="#e6e600"/>
<polygon points="889,141 883,145.5 889,150" fill="#e6e600"/>
<polygon points="64,383.5 70,388 64,392.5" fill="#00e0e0"/>
<polygon points="889,383.5 883,388 889,392.5" fill="#00e0e0"/>
<text x="883.2" y="378.5" font-family="Liberation Mono" font-size="14" fill="#10d0d8" textLength="6.8" lengthAdjust="spacingAndGlyphs" >2</text>
<text x="883.2" y="570.2" font-family="Liberation Mono" font-size="14" fill="#e0e000" textLength="6.8" lengthAdjust="spacingAndGlyphs" >1</text>

<rect x="6" y="706.5" width="886" height="16" fill="#dcd8cc"/><rect x="8.5" y="707.5" width="12" height="13" fill="#dcd8cc" stroke="#aaa69a" stroke-width="1"/><path d="M9.5,720V708.5H20" stroke="#8a877e" stroke-width="1.2" fill="none"/><text x="25.0" y="719.1" font-family="Liberation Sans" font-size="12" fill="#1a1a1a" textLength="68.8" lengthAdjust="spacingAndGlyphs" >Центр 9 ГГц</text><text x="265.2" y="718.6" font-family="Liberation Sans" font-size="12" fill="#b0ada4" textLength="26.8" lengthAdjust="spacingAndGlyphs" >1001</text><text x="378.0" y="718.6" font-family="Liberation Sans" font-size="12" fill="#1a1a1a" textLength="22.0" lengthAdjust="spacingAndGlyphs" >Лин</text><text x="485.2" y="718.6" font-family="Liberation Sans" font-size="12" fill="#b0ada4" textLength="44.8" lengthAdjust="spacingAndGlyphs" >300 кГц</text><text x="614.8" y="718.6" font-family="Liberation Sans" font-size="12" fill="#1a1a1a" textLength="33.2" lengthAdjust="spacingAndGlyphs" >0 дБм</text><text x="821.6" y="718.1" font-family="Liberation Sans" font-size="12" fill="#1a1a1a" textLength="68.9" lengthAdjust="spacingAndGlyphs" >Полоса 0 Гц</text><rect x="6" y="722" width="886" height="20" fill="#7f7c76"/><rect x="6" y="722" width="886" height="1" fill="#73706a"/><rect x="6" y="723" width="886" height="1" fill="#9d9a93"/><rect x="6" y="741" width="886" height="1" fill="#34302b"/><rect x="8" y="725" width="105.3" height="15" fill="#8c8a83"/><path d="M8.5,740V725.5H113.3" stroke="#5f5c55" stroke-width="1" fill="none"/><path d="M8.5,739.5H112.8V726" stroke="#aaa79f" stroke-width="1.2" fill="none"/><text x="11.7" y="737.0" font-family="Liberation Sans" font-size="12" fill="#141414" textLength="99.3" lengthAdjust="spacingAndGlyphs" >14.02.2022 16:44</text><rect x="666" y="725" width="39.700000000000045" height="15" fill="#8c8a83"/><path d="M666.5,740V725.5H705.7" stroke="#5f5c55" stroke-width="1" fill="none"/><path d="M666.5,739.5H705.2V726" stroke="#aaa79f" stroke-width="1.2" fill="none"/><text x="669.0" y="737.0" font-family="Liberation Sans" font-size="12" fill="#141414" textLength="34.2" lengthAdjust="spacingAndGlyphs" >Измер</text><rect x="708" y="725" width="69" height="15" fill="#8c8a83"/><path d="M708.5,740V725.5H777" stroke="#5f5c55" stroke-width="1" fill="none"/><path d="M708.5,739.5H776.5V726" stroke="#aaa79f" stroke-width="1.2" fill="none"/><text x="709.8" y="737.0" font-family="Liberation Sans" font-size="12" fill="#141414" textLength="64.7" lengthAdjust="spacingAndGlyphs" >N22040026</text><rect x="778.7" y="725" width="72.69999999999993" height="15" fill="#8c8a83"/><path d="M779.2,740V725.5H851.4" stroke="#5f5c55" stroke-width="1" fill="none"/><path d="M779.2,739.5H850.9V726" stroke="#aaa79f" stroke-width="1.2" fill="none"/><text x="780.6" y="737.0" font-family="Liberation Sans" font-size="12" fill="#141414" textLength="69.1" lengthAdjust="spacingAndGlyphs" >41.4/43.0°C</text><rect x="853" y="725" width="37.5" height="15" fill="#8c8a83"/><path d="M853.5,740V725.5H890.5" stroke="#5f5c55" stroke-width="1" fill="none"/><path d="M853.5,739.5H890.0V726" stroke="#aaa79f" stroke-width="1.2" fill="none"/><text x="855.0" y="737.0" font-family="Liberation Sans" font-size="12" fill="#141414" textLength="33.0" lengthAdjust="spacingAndGlyphs" >Готов</text>
<rect x="891" y="29" width="129" height="713" fill="#d8d4c8"/><rect x="892" y="29" width="1.5" height="713" fill="#77766f"/><rect x="1018.5" y="29" width="1.5" height="713" fill="#7e8890"/><rect x="892" y="741" width="128" height="1.2" fill="#7e8890"/><rect x="894" y="30" width="124" height="52" rx="1" fill="url(#gblue)"/>
<rect x="894" y="80.5" width="124" height="1.5" fill="#2e3654"/>
<polygon points="902,51.5 896.5,56.5 902,61.5" fill="#8293cc"/><text x="917.3" y="60.5" font-family="Liberation Sans" font-size="12" fill="#f4f6ff" textLength="79.2" lengthAdjust="spacingAndGlyphs" >Импульс. изм.</text><rect x="894" y="83" width="124" height="50" fill="url(#gbtn)"/><rect x="894" y="83" width="124" height="1" fill="#f4f2ea"/><rect x="894" y="132.5" width="124" height="2" fill="#5f5e58"/><rect x="904.5" y="108.8" width="103.5" height="15.0" fill="#ece9de"/><path d="M904.5,123.8V108.8H1008" stroke="#c9c5b9" stroke-width="1" fill="none"/><path d="M904.5,123.3H1008V108.8" stroke="#fbfaf6" stroke-width="1" fill="none"/><text x="917.4" y="105.2" font-family="Liberation Sans" font-size="12" fill="#1a1a1a" textLength="79.1" lengthAdjust="spacingAndGlyphs" >Импульс. изм.</text><text x="944.0" y="120.6" font-family="Liberation Sans" font-size="12" fill="#1a1a1a" textLength="24.7" lengthAdjust="spacingAndGlyphs" >Вкл.</text><rect x="894" y="135" width="124" height="48.5" fill="url(#gbtn)"/><rect x="894" y="135" width="124" height="1" fill="#f4f2ea"/><rect x="894" y="183.0" width="124" height="2" fill="#5f5e58"/><rect x="904.5" y="159.5" width="103.5" height="14.5" fill="#ece9de"/><path d="M904.5,174V159.5H1008" stroke="#c9c5b9" stroke-width="1" fill="none"/><path d="M904.5,173.5H1008V159.5" stroke="#fbfaf6" stroke-width="1" fill="none"/><text x="937.7" y="155.9" font-family="Liberation Sans" font-size="12" fill="#1a1a1a" textLength="37.3" lengthAdjust="spacingAndGlyphs" >Режим</text><text x="905.0" y="171.9" font-family="Liberation Sans" font-size="12" fill="#1a1a1a" textLength="102.8" lengthAdjust="spacingAndGlyphs" >Профиль импульс</text><rect x="894" y="188" width="124" height="48" fill="url(#gbtn)"/><rect x="894" y="188" width="124" height="1" fill="#f4f2ea"/><rect x="894" y="235.5" width="124" height="2" fill="#5f5e58"/><rect x="904.5" y="212.9" width="103.5" height="15.599999999999994" fill="#ece9de"/><path d="M904.5,228.5V212.9H1008" stroke="#c9c5b9" stroke-width="1" fill="none"/><path d="M904.5,228.0H1008V212.9" stroke="#fbfaf6" stroke-width="1" fill="none"/><text x="919.0" y="209.3" font-family="Liberation Sans" font-size="12" fill="#1a1a1a" textLength="75.0" lengthAdjust="spacingAndGlyphs" >Имп. триггер</text><text x="923.8" y="225.3" font-family="Liberation Sans" font-size="12" fill="#1a1a1a" textLength="66.2" lengthAdjust="spacingAndGlyphs" >Внутренний</text><rect x="894" y="238" width="124" height="50" fill="url(#gbtn)"/><rect x="894" y="238" width="124" height="1" fill="#f4f2ea"/><rect x="894" y="287.5" width="124" height="2" fill="#5f5e58"/><rect x="904.5" y="270.9" width="103.5" height="14.800000000000011" fill="#ece9de"/><path d="M904.5,285.7V270.9H1008" stroke="#c9c5b9" stroke-width="1" fill="none"/><path d="M904.5,285.2H1008V270.9" stroke="#fbfaf6" stroke-width="1" fill="none"/><text x="919.8" y="252.7" font-family="Liberation Sans" font-size="12" fill="#8e8b84" textLength="73.8" lengthAdjust="spacingAndGlyphs" >Готовность к</text><text x="944.0" y="267.0" font-family="Liberation Sans" font-size="12" fill="#8e8b84" textLength="25.0" lengthAdjust="spacingAndGlyphs" >имп.</text><text x="940.0" y="283.4" font-family="Liberation Sans" font-size="12" fill="#8e8b84" textLength="32.0" lengthAdjust="spacingAndGlyphs" >Откл.</text><rect x="894" y="290" width="124" height="48.5" fill="url(#gbtn)"/><rect x="894" y="290" width="124" height="1" fill="#f4f2ea"/><rect x="894" y="338.0" width="124" height="2" fill="#5f5e58"/><rect x="904.5" y="315.9" width="103.5" height="14.100000000000023" fill="#ece9de"/><path d="M904.5,330V315.9H1008" stroke="#c9c5b9" stroke-width="1" fill="none"/><path d="M904.5,329.5H1008V315.9" stroke="#fbfaf6" stroke-width="1" fill="none"/><text x="909.5" y="311.8" font-family="Liberation Sans" font-size="12" fill="#8e8b84" textLength="95.5" lengthAdjust="spacingAndGlyphs" >Асинхр. импульс</text><text x="923.0" y="327.7" font-family="Liberation Sans" font-size="12" fill="#8e8b84" textLength="67.0" lengthAdjust="spacingAndGlyphs" >Внутренний</text><rect x="894" y="343" width="124" height="49.5" fill="url(#gbtn)"/><rect x="894" y="343" width="124" height="1" fill="#f4f2ea"/><rect x="894" y="392.0" width="124" height="2" fill="#5f5e58"/><rect x="904.5" y="369" width="103.5" height="15.5" fill="#ece9de"/><path d="M904.5,384.5V369H1008" stroke="#c9c5b9" stroke-width="1" fill="none"/><path d="M904.5,384.0H1008V369" stroke="#fbfaf6" stroke-width="1" fill="none"/><text x="916.4" y="365.2" font-family="Liberation Sans" font-size="12" fill="#1a1a1a" textLength="79.6" lengthAdjust="spacingAndGlyphs" >Прериод имп.</text><text x="944.3" y="381.8" font-family="Liberation Sans" font-size="12" fill="#1a1a1a" textLength="26.7" lengthAdjust="spacingAndGlyphs" >1 mc</text><rect x="894" y="394.5" width="124" height="49.5" fill="url(#gpress)"/><rect x="894" y="394.5" width="124" height="1" fill="#8e8c86"/><rect x="894" y="443.5" width="124" height="2" fill="#4e4d48"/><rect x="904.5" y="420.7" width="103.5" height="14.800000000000011" fill="#85837d"/><path d="M904.5,435.5V420.7H1008" stroke="#6e6c66" stroke-width="1" fill="none"/><path d="M904.5,435.0H1008V420.7" stroke="#9a9892" stroke-width="1" fill="none"/><text x="925.5" y="417.3" font-family="Liberation Sans" font-size="12" fill="#f2f2f0" textLength="61.3" lengthAdjust="spacingAndGlyphs" >Длит. имп.</text><text x="938.0" y="433.2" font-family="Liberation Sans" font-size="12" fill="#e8e8e6" textLength="37.5" lengthAdjust="spacingAndGlyphs" >500 μc</text><rect x="894" y="446" width="124" height="50" fill="url(#gbtn)"/><rect x="894" y="446" width="124" height="1" fill="#f4f2ea"/><rect x="894" y="495.5" width="124" height="2" fill="#5f5e58"/><rect x="904.5" y="472.3" width="103.5" height="15.399999999999977" fill="#ece9de"/><path d="M904.5,487.7V472.3H1008" stroke="#c9c5b9" stroke-width="1" fill="none"/><path d="M904.5,487.2H1008V472.3" stroke="#fbfaf6" stroke-width="1" fill="none"/><text x="914.0" y="468.4" font-family="Liberation Sans" font-size="12" fill="#1a1a1a" textLength="84.0" lengthAdjust="spacingAndGlyphs" >Задержка имп.</text><text x="938.0" y="485.0" font-family="Liberation Sans" font-size="12" fill="#1a1a1a" textLength="37.5" lengthAdjust="spacingAndGlyphs" >500 μc</text><rect x="894" y="498" width="124" height="49.5" fill="url(#gbtn)"/><rect x="894" y="498" width="124" height="1" fill="#f4f2ea"/><rect x="894" y="547.0" width="124" height="2" fill="#5f5e58"/><rect x="904.5" y="524" width="103.5" height="14.899999999999977" fill="#ece9de"/><path d="M904.5,538.9V524H1008" stroke="#c9c5b9" stroke-width="1" fill="none"/><path d="M904.5,538.4H1008V524" stroke="#fbfaf6" stroke-width="1" fill="none"/><text x="914.0" y="520.0" font-family="Liberation Sans" font-size="12" fill="#8e8b84" textLength="84.0" lengthAdjust="spacingAndGlyphs" >Длит. выборки</text><text x="941.0" y="536.6" font-family="Liberation Sans" font-size="12" fill="#8e8b84" textLength="31.0" lengthAdjust="spacingAndGlyphs" >80 μc</text><rect x="894" y="549.5" width="124" height="49.5" fill="url(#gbtn)"/><rect x="894" y="549.5" width="124" height="1" fill="#f4f2ea"/><rect x="894" y="598.5" width="124" height="2" fill="#5f5e58"/><rect x="904.5" y="575.2" width="103.5" height="16.0" fill="#ece9de"/><path d="M904.5,591.2V575.2H1008" stroke="#c9c5b9" stroke-width="1" fill="none"/><path d="M904.5,590.7H1008V575.2" stroke="#fbfaf6" stroke-width="1" fill="none"/><text x="906.6" y="571.8" font-family="Liberation Sans" font-size="12" fill="#1a1a1a" textLength="98.8" lengthAdjust="spacingAndGlyphs" >Задерж. выборки</text><text x="948.5" y="588.5" font-family="Liberation Sans" font-size="12" fill="#1a1a1a" textLength="17.0" lengthAdjust="spacingAndGlyphs" >0 c</text><rect x="894" y="601" width="124" height="51" fill="url(#gbtn)"/><rect x="894" y="601" width="124" height="1" fill="#f4f2ea"/><rect x="894" y="651.5" width="124" height="2" fill="#5f5e58"/><rect x="904.5" y="627.6" width="103.5" height="15.399999999999977" fill="#ece9de"/><path d="M904.5,643V627.6H1008" stroke="#c9c5b9" stroke-width="1" fill="none"/><path d="M904.5,642.5H1008V627.6" stroke="#fbfaf6" stroke-width="1" fill="none"/><text x="913.2" y="624.4" font-family="Liberation Sans" font-size="12" fill="#1a1a1a" textLength="86.8" lengthAdjust="spacingAndGlyphs" >Длит. профиля</text><text x="943.2" y="640.3" font-family="Liberation Sans" font-size="12" fill="#1a1a1a" textLength="27.7" lengthAdjust="spacingAndGlyphs" >2 mc</text><rect x="894" y="185" width="124" height="2" fill="#54649c"/><rect x="894" y="340.5" width="124" height="2" fill="#54649c"/><polygon points="1010.5,154.5 1015.5,159.2 1010.5,163.8" fill="#f2f0ea" stroke="#c4c0b4" stroke-width="0.6"/><rect x="894.5" y="654" width="123.5" height="51" fill="url(#ggreen)"/><rect x="894.5" y="703.5" width="123.5" height="1.8" fill="#767a72"/><rect x="1017" y="654" width="1.5" height="51" fill="#828a80"/><polygon points="950.5,677 961.5,677 956,683" fill="#cfe2cf" stroke="#94a894" stroke-width="0.6"/>
</svg>
</body></html>
